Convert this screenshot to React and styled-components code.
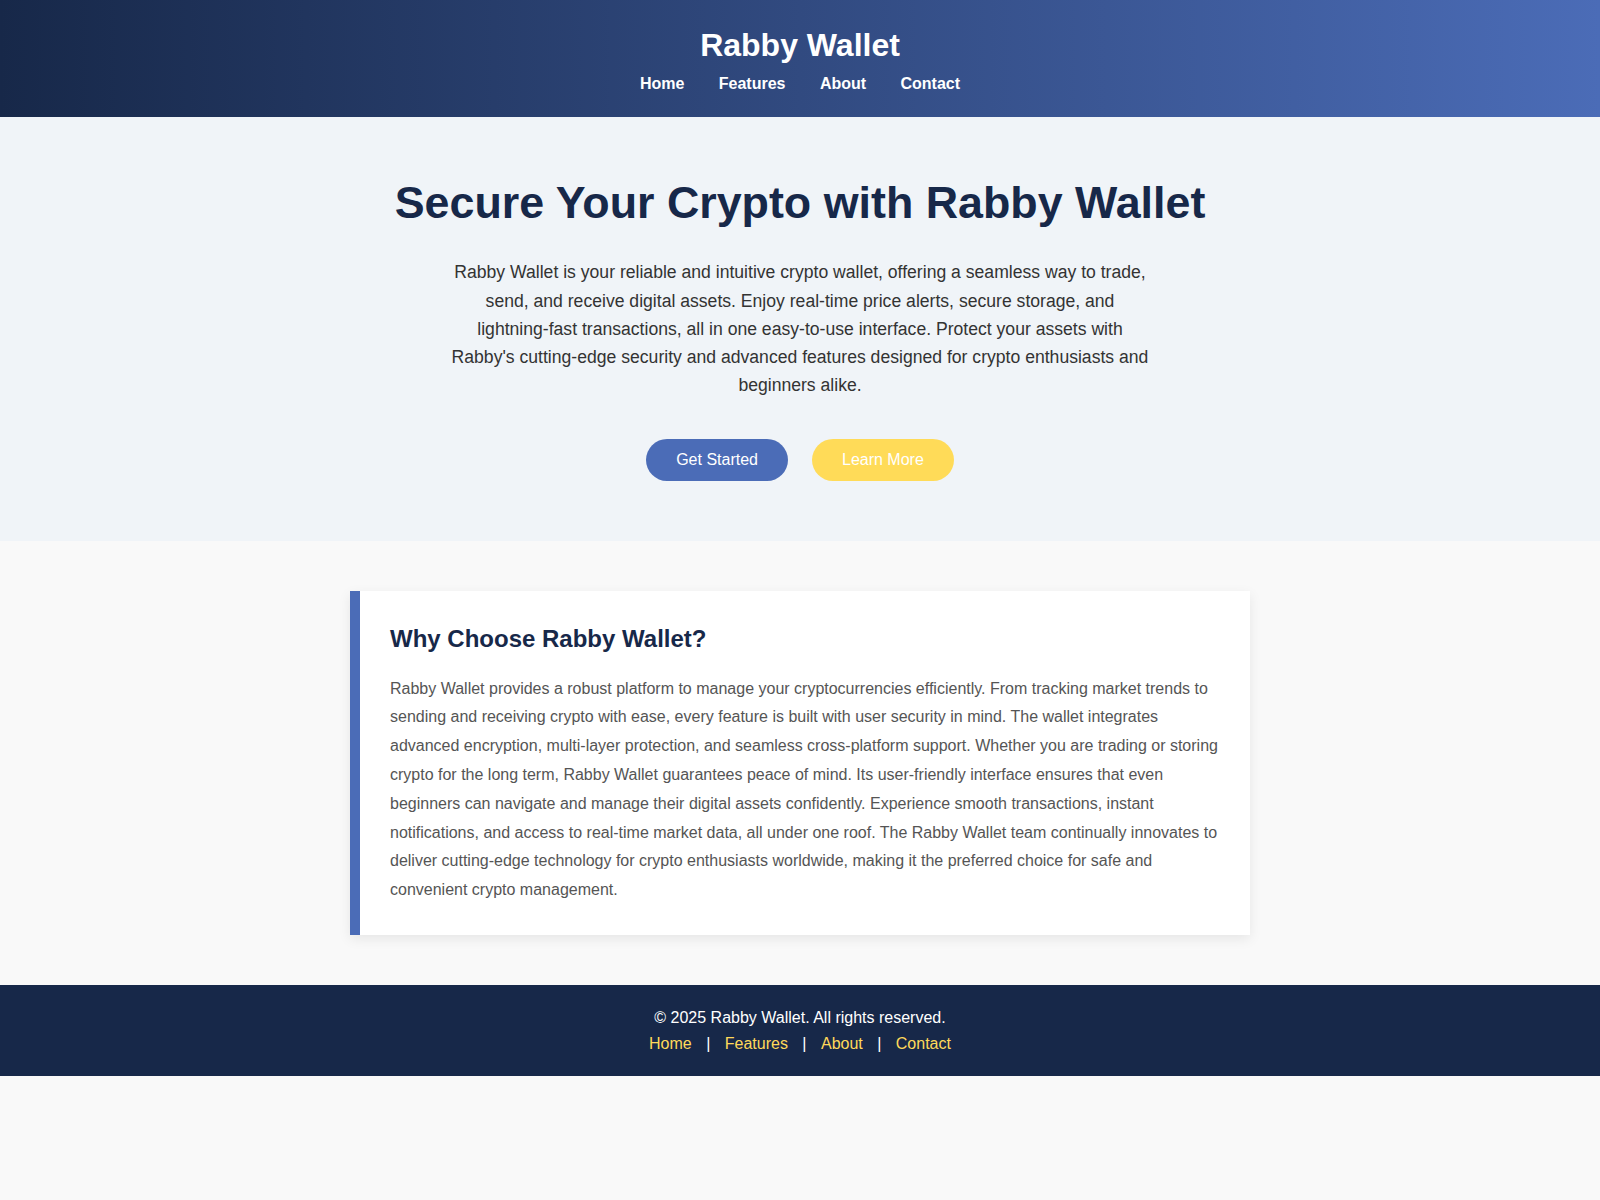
import styled, { createGlobalStyle } from 'styled-components'

const GlobalStyle = createGlobalStyle`
  * { box-sizing: border-box; }
  body {
    margin: 0;
    font-family: "Liberation Sans", Arial, sans-serif;
    line-height: 1.6;
    background: #f9f9f9;
    color: #333;
  }
`

const Header = styled.header`
  background: linear-gradient(90deg, #172849 0%, #4b6cb7 100%);
  color: #fff;
  text-align: center;
  padding: 20px;
`

const Logo = styled.h1`
  margin: 0;
  font-size: 32px;
  font-weight: 700;
`

const Nav = styled.nav`
  display: flex;
  justify-content: center;
  gap: 34.4px;
`

const NavLink = styled.a`
  color: #fff;
  font-weight: 700;
  font-size: 16px;
  text-decoration: none;
`

const Hero = styled.section`
  background: #f0f4f8;
  text-align: center;
  padding: 50px 20px 60px;
`

const HeroTitle = styled.h1`
  margin: 0 0 20px;
  font-size: 44.8px;
  font-weight: 700;
  color: #172849;
`

const HeroText = styled.p`
  max-width: 700px;
  margin: 0 auto 40px;
  font-size: 17.6px;
  color: #333;
`

const Actions = styled.div`
  display: flex;
  justify-content: center;
  gap: 24px;
`

const Button = styled.a`
  display: inline-block;
  padding: 12px 30px;
  border-radius: 25px;
  font-size: 16px;
  line-height: normal;
  color: #fff;
  text-decoration: none;
  background: ${({ $variant }) => ($variant === 'secondary' ? '#ffdb58' : '#4b6cb7')};
`

const Main = styled.main`
  padding: 50px 20px;
`

const Card = styled.article`
  max-width: 900px;
  margin: 0 auto;
  background: #fff;
  border-left: 10px solid #4b6cb7;
  padding: 29px 30px 30px;
  box-shadow: 0 4px 12px rgba(0, 0, 0, 0.08);
`

const CardTitle = styled.h2`
  margin: 0 0 16px;
  font-size: 24px;
  font-weight: 700;
  color: #172849;
`

const CardText = styled.p`
  margin: 0;
  font-size: 16px;
  line-height: 1.8;
  color: #555;
`

const Footer = styled.footer`
  background: #172849;
  color: #fff;
  text-align: center;
  padding: 20px;
  font-size: 16px;
`

const FooterLine = styled.p`
  margin: 0;
`

const FooterLink = styled.a`
  color: #ffd95a;
  text-decoration: none;
  margin: 0 10px;
`

const links = ['Home', 'Features', 'About', 'Contact']

export default function App() {
  return (
    <>
      <GlobalStyle />
      <Header>
        <Logo>Rabby Wallet</Logo>
        <Nav>
          {links.map((l) => (
            <NavLink key={l} href="#">{l}</NavLink>
          ))}
        </Nav>
      </Header>
      <Hero>
        <HeroTitle>Secure Your Crypto with Rabby Wallet</HeroTitle>
        <HeroText>
          Rabby Wallet is your reliable and intuitive crypto wallet, offering a seamless way to trade,
          send, and receive digital assets. Enjoy real-time price alerts, secure storage, and
          lightning-fast transactions, all in one easy-to-use interface. Protect your assets with
          Rabby's cutting-edge security and advanced features designed for crypto enthusiasts and
          beginners alike.
        </HeroText>
        <Actions>
          <Button href="#">Get Started</Button>
          <Button href="#" $variant="secondary">Learn More</Button>
        </Actions>
      </Hero>
      <Main>
        <Card>
          <CardTitle>Why Choose Rabby Wallet?</CardTitle>
          <CardText>
            Rabby Wallet provides a robust platform to manage your cryptocurrencies efficiently. From
            tracking market trends to sending and receiving crypto with ease, every feature is built
            with user security in mind. The wallet integrates advanced encryption, multi-layer
            protection, and seamless cross-platform support. Whether you are trading or storing crypto
            for the long term, Rabby Wallet guarantees peace of mind. Its user-friendly interface
            ensures that even beginners can navigate and manage their digital assets confidently.
            Experience smooth transactions, instant notifications, and access to real-time market data,
            all under one roof. The Rabby Wallet team continually innovates to deliver cutting-edge
            technology for crypto enthusiasts worldwide, making it the preferred choice for safe and
            convenient crypto management.
          </CardText>
        </Card>
      </Main>
      <Footer>
        <FooterLine>© 2025 Rabby Wallet. All rights reserved.</FooterLine>
        <FooterLine>
          {links.map((l, i) => (
            <span key={l}>
              {i > 0 && ' | '}
              <FooterLink href="#">{l}</FooterLink>
            </span>
          ))}
        </FooterLine>
      </Footer>
    </>
  )
}
